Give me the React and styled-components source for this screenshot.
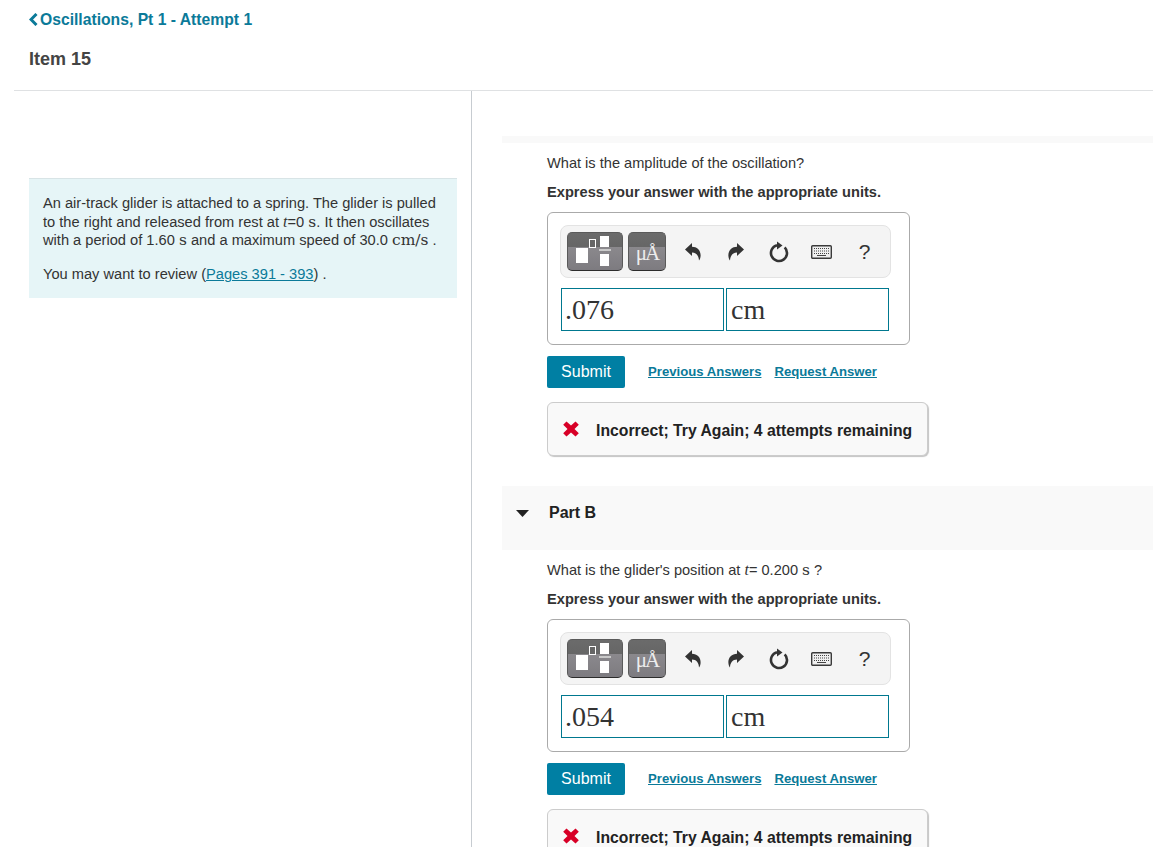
import React from "react";
import styled, { createGlobalStyle } from "styled-components";

const GlobalStyle = createGlobalStyle`
    html, body {
        margin: 0;
        padding: 0;
        height: 847px;
        overflow: hidden;
        background: #fff;
        font-family: "Liberation Sans", Arial, sans-serif;
        color: #333;
    }
`;

const Header = styled.header`
    margin-left: 14px;
    height: 91px;
    padding: 10px 0 0 15px;
    box-sizing: border-box;
    border-bottom: 1px solid #dfe1e3;
`;

const BackLink = styled.a`
    display: flex;
    align-items: center;
    gap: 2px;
    height: 19px;
    color: #0b7a99;
    font-size: 15.7px;
    font-weight: 700;
    svg {
        width: 9px;
        height: 13px;
    }
`;

const ItemTitle = styled.h1`
    margin: 20px 0 0;
    font-size: 18px;
    line-height: 21px;
    font-weight: 700;
    color: #444;
`;

const Columns = styled.div`
    display: grid;
    grid-template-columns: 472px 1fr;
    height: 756px;
`;

const LeftColumn = styled.aside`
    border-right: 1px solid #c7ccd1;
    padding: 87px 14px 0 29px;
`;

const Passage = styled.div`
    background: #e6f5f7;
    border-top: 1px solid #d8e4e6;
    padding: 15px 14px 15px;
    height: 120px;
    box-sizing: border-box;
    font-size: 14.65px;
    line-height: 18.5px;
    color: #333;
    p {
        margin: 0 0 15.5px;
    }
    p:last-child {
        margin: 0;
    }
    a {
        color: #0b7a99;
        text-decoration: underline;
    }
`;

const PassageLine = styled.span`
    display: block;
    height: 18.5px;
    white-space: nowrap;
`;

const MathText = styled.span`
    display: inline-block;
    line-height: 14px;
    font-family: ${(p) => (p.$italic ? '"Liberation Serif", serif' : '"DejaVu Serif", serif')};
    font-size: ${(p) => (p.$italic ? "16px" : "15.5px")};
    font-style: ${(p) => (p.$italic ? "italic" : "normal")};
`;

const RightColumn = styled.main`
    padding: 45px 0 0 30px;
`;

const TopStrip = styled.div`
    height: 7px;
    background: #f9f9f9;
`;

const PartHeader = styled.div`
    display: flex;
    align-items: center;
    height: 64px;
    margin-top: 30px;
    padding: 0 0 10px 14px;
    box-sizing: border-box;
    background: #f9f9f9;
    font-size: 16px;
    font-weight: 700;
    color: #222;
    svg {
        width: 13px;
        height: 7px;
        margin-right: 20px;
    }
`;

const PartBody = styled.section`
    padding: 11px 0 0 45px;
`;

const Question = styled.p`
    margin: 0;
    font-size: 14.6px;
    line-height: 18px;
`;

const Instruction = styled.p`
    margin: 11px 0 0;
    font-size: 14.63px;
    line-height: 18px;
    font-weight: 700;
`;

const AnswerCard = styled.div`
    width: 363px;
    height: 133px;
    margin-top: 11px;
    box-sizing: border-box;
    border: 1px solid #aaa;
    border-radius: 6px;
    padding: 12px 12px 0 12px;
`;

const Toolbar = styled.div`
    display: flex;
    align-items: center;
    width: 331px;
    height: 53px;
    margin-bottom: 10px;
    padding: 0 0 0 6px;
    box-sizing: border-box;
    background: #f4f4f4;
    border: 1px solid #e3e3e3;
    border-radius: 8px;
`;

const PaletteButton = styled.div`
    width: ${(p) => p.$width}px;
    height: 39px;
    margin-right: 5px;
    padding-bottom: ${(p) => (p.$text ? "3px" : "0")};
    box-sizing: border-box;
    border-radius: 5px;
    border: 1px solid #5a5a5a;
    border-bottom-color: #2c2c2c;
    overflow: hidden;
    background: linear-gradient(#6b6b6b 0, #666 37%, #8b898d 37%, #7d7b80 100%);
    color: #ededed;
    display: flex;
    align-items: flex-end;
    justify-content: center;
    font-family: "Liberation Serif", serif;
    font-size: 21px;
    letter-spacing: -2px;
    line-height: 28px;
    svg {
        display: block;
    }
`;

const ToolSlot = styled.div`
    width: 43px;
    display: flex;
    align-items: center;
    justify-content: center;
    color: #333;
    font-size: 21px;
`;

const FlipIcon = styled.svg`
    width: 16px;
    height: 18px;
    transform: ${(p) => (p.$flip ? "scaleX(-1)" : "none")};
`;

const InputRow = styled.div`
    display: flex;
    gap: 2px;
    margin-left: 1px;
`;

const AnswerInput = styled.div`
    width: 163px;
    height: 43px;
    box-sizing: border-box;
    border: 1px solid #00788f;
    padding-left: ${(p) => (p.$unit ? "4px" : "3px")};
    font-family: "Liberation Serif", serif;
    font-size: 28px;
    line-height: 41px;
    color: #333;
`;

const ActionRow = styled.div`
    display: flex;
    align-items: center;
    margin-top: 11px;
    height: 32px;
`;

const SubmitButton = styled.button`
    width: 78px;
    height: 32px;
    margin-right: 23px;
    border: 0;
    border-radius: 2px;
    background: #007fa3;
    color: #fff;
    font: 400 16px "Liberation Sans", Arial, sans-serif;
`;

const ActionLink = styled.a`
    margin: 0 13px 2px 0;
    font-size: 13.15px;
    font-weight: 700;
    color: #0b7a99;
    text-decoration: underline;
`;

const Feedback = styled.div`
    display: flex;
    align-items: center;
    width: 381px;
    height: 54px;
    margin-top: 14px;
    padding: 3px 0 0 15px;
    box-sizing: border-box;
    background: #f9f9f9;
    border: 1px solid #ccc;
    border-radius: 6px;
    box-shadow: 1px 1px 1px #c4c4c4;
    font-size: 15.75px;
    font-weight: 700;
    color: #222;
    svg {
        width: 16px;
        height: 16px;
        margin-right: 17px;
        margin-bottom: 4px;
    }
`;

const UndoIcon = ({ flip }) => (
    <FlipIcon $flip={flip} viewBox="0 0 16 18">
        <path d="M0 6.5 L7 0 V3.8 C12 3.8 16 7.5 15.6 13 C15.4 15 14.8 16.5 14 17.5 C13.8 13 11.5 9.6 7 9.6 V13 Z" fill="#333" />
    </FlipIcon>
);

const ReloadIcon = () => (
    <svg width="20" height="22" viewBox="0 0 20 22">
        <path d="M8 4.25 A8 8 0 1 0 15.7 6.4" fill="none" stroke="#333" strokeWidth="2.6" />
        <path d="M8 0.5 L13.5 4.5 L8 8.5 Z" fill="#333" />
    </svg>
);

const KeyboardIcon = () => (
    <svg width="21" height="14" viewBox="0 0 21 14">
        <rect x="0.7" y="0.7" width="19.6" height="12.6" rx="1" fill="#f0f0f0" stroke="#3a3a3a" strokeWidth="1.4" />
        {[3, 5.5, 8].map((y) =>
            [3, 5, 7, 9, 11, 13, 15, 17].map((x) => (
                <rect key={`${x}-${y}`} x={x} y={y} width="1" height="1" fill="#444" />
            ))
        )}
        <rect x="6" y="10" width="9" height="1" fill="#444" />
    </svg>
);

const FractionPalette = () => (
    <svg width="54" height="37" viewBox="1 1 54 37">
        <rect x="9" y="16" width="12" height="15" fill="#fff" />
        <rect x="22.5" y="7.5" width="6" height="8" fill="#666" stroke="#fff" />
        <rect x="33" y="4" width="9" height="11" fill="#fff" />
        <rect x="32" y="17" width="12" height="2" fill="#c9c9c9" />
        <rect x="33" y="22" width="9" height="12" fill="#fff" />
    </svg>
);

const AnswerPart = ({ question, value }) => (
    <PartBody>
        <Question>{question}</Question>
        <Instruction>Express your answer with the appropriate units.</Instruction>
        <AnswerCard>
            <Toolbar>
                <PaletteButton $width={56}><FractionPalette /></PaletteButton>
                <PaletteButton $width={38} $text>μÅ</PaletteButton>
                <ToolSlot><UndoIcon /></ToolSlot>
                <ToolSlot><UndoIcon flip /></ToolSlot>
                <ToolSlot><ReloadIcon /></ToolSlot>
                <ToolSlot><KeyboardIcon /></ToolSlot>
                <ToolSlot>?</ToolSlot>
            </Toolbar>
            <InputRow>
                <AnswerInput>{value}</AnswerInput>
                <AnswerInput $unit>cm</AnswerInput>
            </InputRow>
        </AnswerCard>
        <ActionRow>
            <SubmitButton>Submit</SubmitButton>
            <ActionLink>Previous Answers</ActionLink>
            <ActionLink>Request Answer</ActionLink>
        </ActionRow>
        <Feedback>
            <svg viewBox="0 0 16 16">
                <path d="M3.5 0.5 L8 4.5 L12.5 0.5 L15.8 3.8 L11.5 8 L15.8 12.2 L12.5 15.5 L8 11.5 L3.5 15.5 L0.2 12.2 L4.5 8 L0.2 3.8 Z" fill="#d80027" />
            </svg>
            Incorrect; Try Again; 4 attempts remaining
        </Feedback>
    </PartBody>
);

const App = () => {
    return (
        <>
            <GlobalStyle />
            <Header>
                <BackLink>
                    <svg viewBox="0 0 9 13">
                        <path d="M7.5 1 L2 6.5 L7.5 12" fill="none" stroke="#0b7a99" strokeWidth="3" />
                    </svg>
                    Oscillations, Pt 1 - Attempt 1
                </BackLink>
                <ItemTitle>Item 15</ItemTitle>
            </Header>
            <Columns>
                <LeftColumn>
                    <Passage>
                        <p>
                            <PassageLine>An air-track glider is attached to a spring. The glider is pulled</PassageLine>
                            <PassageLine>
                                to the right and released from rest at <MathText $italic>t</MathText>=0 <MathText>s</MathText>. It then oscillates
                            </PassageLine>
                            <PassageLine>
                                with a period of 1.60 <MathText>s</MathText> and a maximum speed of 30.0 <MathText>cm/s</MathText> .
                            </PassageLine>
                        </p>
                        <p>
                            You may want to review (<a>Pages 391 - 393</a>) .
                        </p>
                    </Passage>
                </LeftColumn>
                <RightColumn>
                    <TopStrip />
                    <AnswerPart question="What is the amplitude of the oscillation?" value=".076" />
                    <PartHeader>
                        <svg viewBox="0 0 13 7">
                            <path d="M0 0 H13 L6.5 7 Z" fill="#222" />
                        </svg>
                        Part B
                    </PartHeader>
                    <AnswerPart
                        question={
                            <>
                                What is the glider's position at <MathText $italic>t</MathText>= 0.200 <MathText>s</MathText> ?
                            </>
                        }
                        value=".054"
                    />
                </RightColumn>
            </Columns>
        </>
    );
};

export default App;
